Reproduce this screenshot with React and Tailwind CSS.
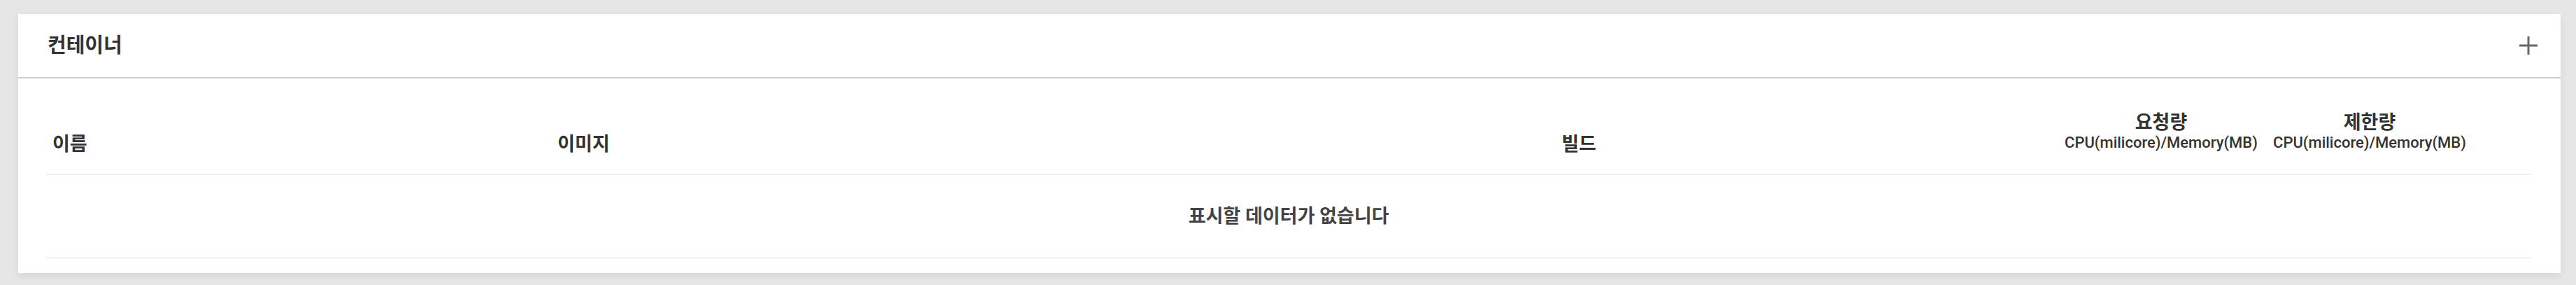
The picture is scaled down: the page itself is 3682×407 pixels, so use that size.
import React from 'react'

const font = { fontFamily: 'Roboto, "Noto Sans CJK KR", sans-serif' }

const PlusIcon = () => (
    <svg width="26" height="26" viewBox="0 0 26 26" className="text-[#666]">
        <path d="M13 0v26M0 13h26" stroke="currentColor" strokeWidth="3" />
    </svg>
)

const App = () => {
    return (
        <div className="w-full min-h-[407px] bg-[#e6e6e6] pt-[20px] pl-[26px] pr-[22px]" style={font}>
            <div className="bg-white shadow-[0_4px_10px_rgba(0,0,0,0.08)]">
                <div className="h-[92px] flex items-center justify-between pl-[42px] pr-[33px] border-b-2 border-[#cccccc]">
                    <h2 className="text-[29px] font-bold text-[#333] leading-none">컨테이너</h2>
                    <button className="w-[26px] h-[26px] flex items-center justify-center">
                        <PlusIcon />
                    </button>
                </div>
                <div className="pl-[40px] pr-[42px] pb-[21px]">
                    <div className="grid grid-cols-[721px_1435px_718px_298px_298px_1fr] items-end pt-[48px] pb-[27px] border-b-2 border-[#f0f0f0] text-[#333]">
                        <div className="pl-[9px] text-[27px] font-bold leading-[30px]">이름</div>
                        <div className="pl-[10px] text-[27px] font-bold leading-[30px]">이미지</div>
                        <div className="pl-[10px] text-[27px] font-bold leading-[30px]">빌드</div>
                        <div className="flex flex-col items-center mb-[3px]">
                            <span className="text-[27px] font-bold leading-[30px]">요청량</span>
                            <span className="text-[22px] font-medium leading-[28px]">CPU(milicore)/Memory(MB)</span>
                        </div>
                        <div className="flex flex-col items-center mb-[3px]">
                            <span className="text-[27px] font-bold leading-[30px]">제한량</span>
                            <span className="text-[22px] font-medium leading-[28px]">CPU(milicore)/Memory(MB)</span>
                        </div>
                        <div></div>
                    </div>
                    <div className="h-[119px] pt-[2px] flex items-center justify-center border-b-2 border-[#f0f0f0]">
                        <span className="text-[27px] font-bold text-[#444]">표시할 데이터가 없습니다</span>
                    </div>
                </div>
            </div>
        </div>
    )
}

export default App
